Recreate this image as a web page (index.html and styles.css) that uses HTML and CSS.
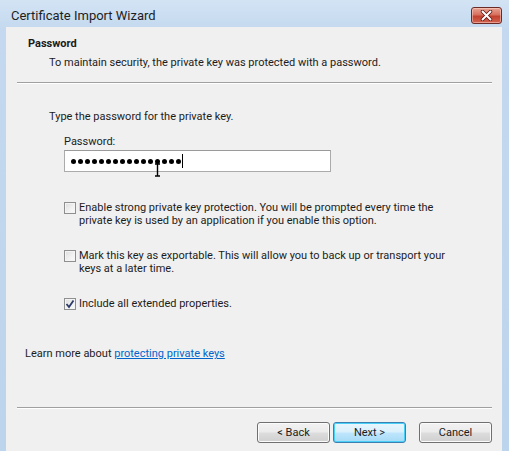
FILE: index.html
```html
<!DOCTYPE html>
<html>
<head>
<meta charset="utf-8">
<link rel="stylesheet" href="styles.css">
</head>
<body>
<div class="window">
  <div class="titlebar">
    <span class="title">Certificate Import Wizard</span>
    <button class="close" aria-label="Close">
      <svg width="13" height="11" viewBox="0 0 13 11"><path d="M2.5 1.5 L10.5 9.5 M10.5 1.5 L2.5 9.5" stroke="#5a1010" stroke-width="3.4" stroke-linecap="round"/><path d="M2.5 1.5 L10.5 9.5 M10.5 1.5 L2.5 9.5" stroke="#fff" stroke-width="2" stroke-linecap="round"/></svg>
    </button>
  </div>
  <div class="client">
    <div class="header">
      <div class="h-title">Password</div>
      <div class="h-sub">To maintain security, the private key was protected with a password.</div>
    </div>
    <div class="sep"></div>
    <div class="body">
      <div class="intro">Type the password for the private key.</div>
      <div class="field">
        <div class="label">Password:</div>
        <div class="input">
          <span class="dots"><i></i><i></i><i></i><i></i><i></i><i></i><i></i><i></i><i></i><i></i><i></i><i></i><i></i><i></i><i></i><i></i></span>
          <span class="caret"></span>
          <svg class="ibeam" width="7" height="14" viewBox="0 0 7 14"><path d="M1 1 H6 M3.5 1 V13 M1 13 H6" stroke="#000" stroke-width="1.4" fill="none"/></svg>
        </div>
      </div>
      <div class="opts">
        <label class="opt"><span class="cb"></span><span>Enable strong private key protection. You will be prompted every time the<br>private key is used by an application if you enable this option.</span></label>
        <label class="opt"><span class="cb"></span><span>Mark this key as exportable. This will allow you to back up or transport your<br>keys at a later time.</span></label>
        <label class="opt"><span class="cb checked"><svg width="10" height="10" viewBox="0 0 10 10"><path d="M1.5 5 L4 8 L8.5 1.5" stroke="#2b3a68" stroke-width="1.8" fill="none"/></svg></span><span>Include all extended properties.</span></label>
      </div>
      <div class="learn">Learn more about <a href="#">protecting private keys</a></div>
    </div>
    <div class="sep bottom-sep"></div>
    <div class="buttons">
      <button class="btn">&lt; Back</button>
      <button class="btn default">Next &gt;</button>
      <button class="btn cancel">Cancel</button>
    </div>
  </div>
</div>
</body>
</html>
```

FILE: styles.css
```css
* { box-sizing: border-box; }
html, body { margin: 0; padding: 0; }
body {
  width: 509px;
  height: 451px;
  overflow: hidden;
  font-family: Roboto, "Noto Sans", sans-serif;
  font-size: 11px;
  color: #1c1c1c;
}
.window {
  width: 509px;
  height: 451px;
  display: flex;
  flex-direction: column;
  background: linear-gradient(180deg, #d3e3f4 0%, #c4d9ef 30px, #bcd4ec 100%);
}
.titlebar {
  height: 27px;
  flex: none;
  display: flex;
  align-items: flex-start;
  justify-content: space-between;
  padding: 0 7px 0 11px;
}
.title {
  font-size: 13px;
  line-height: 15px;
  margin-top: 8px;
  color: #1e1e1e;
}
.close {
  margin-top: 7px;
  width: 31px;
  height: 17px;
  padding: 0;
  border: 1px solid #6b2a26;
  border-radius: 3px;
  background: linear-gradient(180deg, #e8a393 0%, #d7705e 45%, #c2412e 55%, #d2644f 100%);
  display: flex;
  align-items: center;
  justify-content: center;
  box-shadow: inset 0 0 0 1px rgba(255,220,210,0.5);
}
.client {
  flex: 1;
  margin: 0 7px 0 6px;
  background: #f0f0f0;
  display: flex;
  flex-direction: column;
}
.header {
  padding: 10px 0 0 22px;
}
.h-title {
  font-weight: bold;
  line-height: 14px;
  color: #1a1a1a;
}
.h-sub {
  line-height: 14px;
  margin-top: 5px;
  padding-left: 21px;
}
.sep {
  height: 2px;
  margin: 12px 10px 0 11px;
  border-top: 1px solid #a0a0a0;
  border-bottom: 1px solid #ffffff;
}
.body {
  flex: 1;
  display: flex;
  flex-direction: column;
}
.intro {
  line-height: 14px;
  margin-top: 26px;
  padding-left: 43px;
}
.field {
  padding-left: 58px;
  margin-top: 11px;
}
.label {
  line-height: 14px;
}
.input {
  position: relative;
  margin-top: 1px;
  width: 267px;
  height: 22px;
  background: #fff;
  border: 1px solid #ababab;
  border-top-color: #9a9a9a;
  display: flex;
  align-items: center;
  padding-left: 6px;
}
.dots {
  display: flex;
  gap: 2px;
}
.dots i {
  display: block;
  width: 5px;
  height: 5px;
  border-radius: 50%;
  background: #000;
}
.caret {
  width: 1px;
  height: 14px;
  background: #000;
  margin-left: 1px;
}
.ibeam {
  position: absolute;
  left: 89px;
  top: 12px;
}
.opts {
  padding-left: 58px;
  margin-top: 29px;
  display: flex;
  flex-direction: column;
  gap: 22px;
}
.opt {
  display: flex;
  align-items: flex-start;
  gap: 3px;
  line-height: 13px;
}
.cb {
  flex: none;
  width: 12px;
  height: 12px;
  margin-top: 1px;
  border: 1px solid #8e8f8f;
  background: linear-gradient(135deg, #dcdcdc 0%, #f2f2f2 60%, #fafafa 100%);
  box-shadow: inset 0 0 0 1px #f4f4f4;
  display: flex;
  align-items: center;
  justify-content: center;
}
.learn {
  margin-top: 37px;
  padding-left: 19px;
  line-height: 14px;
}
.learn a {
  color: #0066cc;
  text-decoration: underline;
}
.bottom-sep {
  margin-top: 0;
}
.buttons {
  display: flex;
  justify-content: flex-end;
  gap: 3px;
  padding: 13px 10px 8px 0;
}
.btn {
  width: 73px;
  height: 21px;
  font-family: inherit;
  font-size: 11px;
  color: #1c1c1c;
  border: 1px solid #707070;
  border-radius: 3px;
  background: linear-gradient(180deg, #f2f2f2 0%, #ebebeb 48%, #dddddd 52%, #cfcfcf 100%);
  box-shadow: inset 0 0 0 1px #fbfbfb;
  padding: 0;
}
.btn.default {
  border-color: #3c7fb1;
  background: linear-gradient(180deg, #eaf6fd 0%, #d9f0fc 48%, #bee6fd 52%, #a7d9f5 100%);
  box-shadow: inset 0 0 0 1px #48d0f8;
}
.btn.cancel {
  margin-left: 10px;
}
```
